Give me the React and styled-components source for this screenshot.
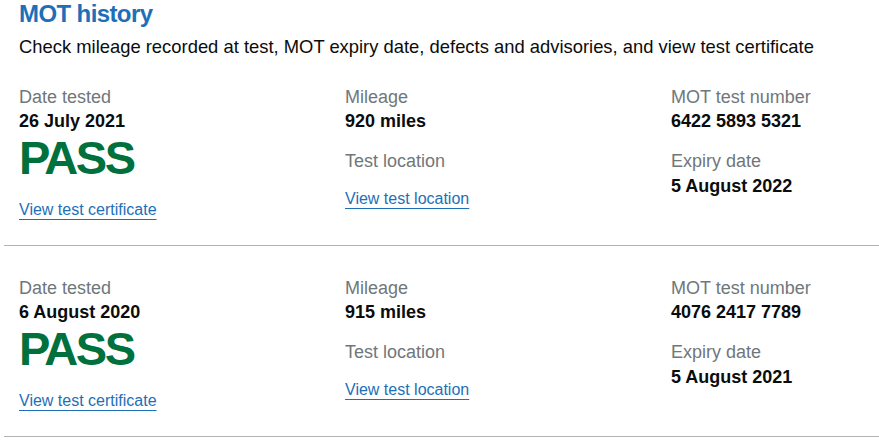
import React from "react";
import styled, { createGlobalStyle } from "styled-components";

const Global = createGlobalStyle`
  html, body { margin: 0; padding: 0; background: #ffffff; overflow: hidden; }
  body { font-family: "Liberation Sans", Arial, sans-serif; color: #0b0c0c; }
`;

const Page = styled.main`
  margin-left: 4px;
`;

const Header = styled.header`
  padding: 0 15px;
`;

const Title = styled.h2`
  margin: 0;
  font-size: 24px;
  line-height: 28px;
  font-weight: 700;
  letter-spacing: -0.6px;
  color: #1d70b8;
`;

const Lead = styled.p`
  margin: 6px 0 0;
  font-size: 18.4px;
  line-height: 25px;
  color: #0b0c0c;
  white-space: nowrap;
`;

const Record = styled.section`
  display: grid;
  grid-template-columns: repeat(3, 326px);
  padding-top: ${(p) => p.$top}px;
  padding-bottom: 25px;
  border-bottom: 1px solid #b1b4b6;
`;

const Column = styled.div`
  padding-left: 15px;
  display: flex;
  flex-direction: column;
  align-items: flex-start;
`;

const Label = styled.div`
  font-size: 18px;
  line-height: 24px;
  color: #6f777b;
  margin-top: ${(p) => (p.$spaced ? 16 : 0)}px;
`;

const Value = styled.div`
  font-size: 18px;
  line-height: 24px;
  font-weight: 700;
  color: #0b0c0c;
  margin-top: ${(p) => (p.$offset ? 1 : 0)}px;
`;

const Result = styled.div`
  font-size: 47px;
  line-height: 50px;
  font-weight: 700;
  letter-spacing: -2.5px;
  color: #00703c;
`;

const Link = styled.a`
  display: block;
  margin-top: ${(p) => p.$top}px;
  font-size: 16px;
  line-height: 20px;
  color: #1d70b8;
  text-decoration: underline;
  text-decoration-thickness: 1px;
  text-underline-offset: 4px;
  cursor: pointer;
`;

const tests = [
  {
    date: "26 July 2021",
    mileage: "920 miles",
    number: "6422 5893 5321",
    expiry: "5 August 2022",
  },
  {
    date: "6 August 2020",
    mileage: "915 miles",
    number: "4076 2417 7789",
    expiry: "5 August 2021",
  },
];

export default function App() {
  return (
    <>
      <Global />
      <Page>
        <Header>
          <Title>MOT history</Title>
          <Lead>
            Check mileage recorded at test, MOT expiry date, defects and advisories, and view test certificate
          </Lead>
        </Header>
        {tests.map((t, i) => (
          <Record key={t.number} $top={i === 0 ? 26 : 30}>
            <Column>
              <Label>Date tested</Label>
              <Value>{t.date}</Value>
              <Result>PASS</Result>
              <Link $top={17}>View test certificate</Link>
            </Column>
            <Column>
              <Label>Mileage</Label>
              <Value>{t.mileage}</Value>
              <Label $spaced>Test location</Label>
              <Link $top={16}>View test location</Link>
            </Column>
            <Column>
              <Label>MOT test number</Label>
              <Value>{t.number}</Value>
              <Label $spaced>Expiry date</Label>
              <Value $offset>{t.expiry}</Value>
            </Column>
          </Record>
        ))}
      </Page>
    </>
  );
}
